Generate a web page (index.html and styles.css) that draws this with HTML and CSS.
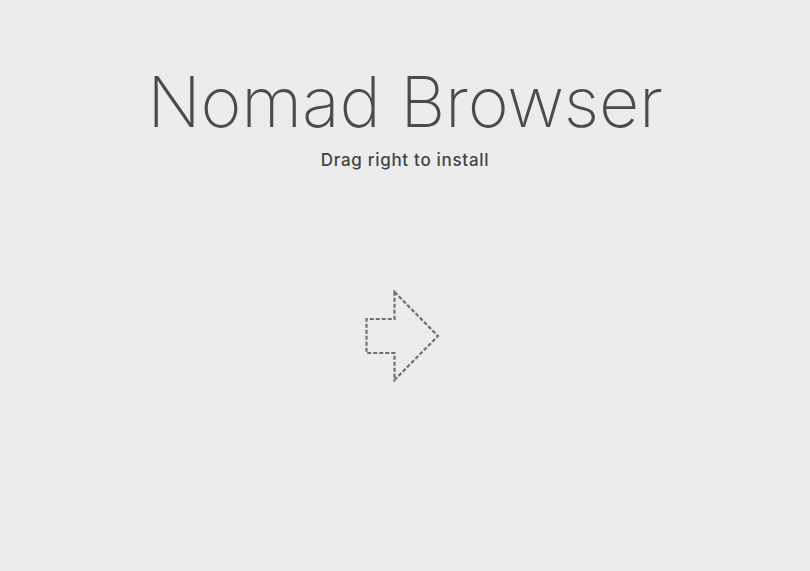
FILE: index.html
```html
<!DOCTYPE html>
<html>
<head>
<meta charset="utf-8">
<link rel="stylesheet" href="styles.css">
</head>
<body>
<main class="page">
  <h1 class="title">Nomad Browser</h1>
  <p class="subtitle">Drag right to install</p>
  <div class="arrow">
    <svg width="80" height="94" viewBox="0 0 80 94">
      <path d="M29.5 2 L73 46 L29.5 90 L29.5 63 L1.5 63 L1.5 29 L29.5 29 Z" fill="none" stroke="#707070" stroke-width="2.2" stroke-dasharray="4 2"/>
    </svg>
  </div>
</main>
</body>
</html>
```
FILE: styles.css
```css
html, body {
  margin: 0;
  padding: 0;
  background: #ececec;
}
.page {
  width: 810px;
  height: 571px;
  display: flex;
  flex-direction: column;
  align-items: center;
  padding-top: 61px;
  box-sizing: border-box;
}
.title {
  margin: 0;
  font-family: Inter, "Liberation Sans", sans-serif;
  font-weight: 200;
  font-size: 70px;
  line-height: 82px;
  color: #4b4b4b;
  letter-spacing: -0.2px;
}
.subtitle {
  margin: 7px 0 0;
  font-family: Inter, "Noto Sans", sans-serif;
  font-weight: 500;
  font-size: 17px;
  line-height: 20px;
  color: #444;
  letter-spacing: 0.7px;
}
.arrow {
  margin-top: 120px;
}
.arrow svg {
  display: block;
}
```
